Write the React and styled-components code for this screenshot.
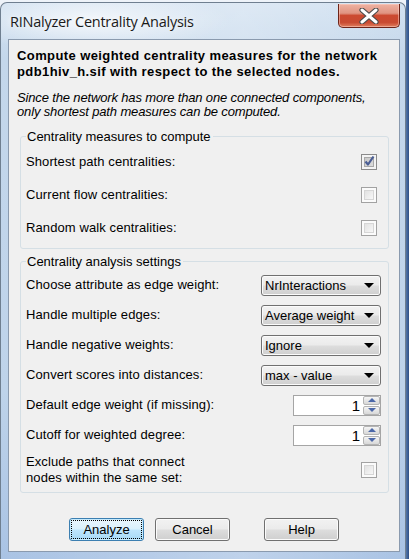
import React from 'react';
import styled, { createGlobalStyle, css } from 'styled-components';

const Global = createGlobalStyle`
  html, body { margin: 0; padding: 0; }
  body {
    width: 409px; height: 559px; overflow: hidden;
    background: #e4ecf5;
    font-family: "Liberation Sans", Arial, sans-serif;
  }
  * { box-sizing: border-box; }
`;

const Desktop = styled.div`
  width: 409px;
  height: 559px;
  padding-top: 2px;
  background: linear-gradient(90deg, #eef3f9 0%, #eef3f9 406px, #5577a8 406px, #2d4f86 409px);
`;

const Window = styled.div`
  width: 406px;
  height: 557px;
  display: flex;
  flex-direction: column;
  padding: 0 5px 7px 7px;
  border: 1px solid #6f7f90;
  border-bottom: none;
  border-radius: 7px 7px 0 0;
  background:
    radial-gradient(ellipse 140px 30px at 90px 18px, rgba(255,255,255,0.75), rgba(255,255,255,0) 100%),
    linear-gradient(90deg, rgba(255,255,255,0) 0%, rgba(255,255,255,0.25) 60%, rgba(255,255,255,0) 100%),
    linear-gradient(180deg, #d3e2f1 0%, #c4d7eb 10%, #bed3ea 70%, #a9c3e4 100%);
`;

const TitleBar = styled.div`
  height: 36px;
  display: flex;
  justify-content: space-between;
  align-items: flex-start;
`;

const Title = styled.div`
  margin: 10px 0 0 2px;
  font-family: "Open Sans", "Noto Sans", sans-serif;
  font-size: 14.5px;
  line-height: 18px;
  letter-spacing: -0.25px;
  color: #1a1a1a;
  text-shadow: 0 0 6px rgba(255,255,255,0.9);
`;

const CloseButton = styled.div`
  width: 62px;
  height: 24px;
  margin-top: 1px;
  border: 1px solid #6d2419;
  border-top: none;
  border-radius: 0 0 5px 5px;
  display: flex;
  align-items: center;
  justify-content: center;
  background: linear-gradient(180deg, #eeb3a3 0%, #e09481 40%, #cc4a30 50%, #c94a31 80%, #e0805f 100%);
  box-shadow: inset 0 0 0 1px rgba(255, 210, 200, 0.5);
`;

const Client = styled.div`
  flex: 1;
  display: flex;
  flex-direction: column;
  background: #f0f0f0;
  border: 1px solid #8a9aae;
  padding: 8px 10px 0 8px;
`;

const Heading = styled.div`
  font-size: 13px;
  font-weight: bold;
  line-height: 16px;
  letter-spacing: 0.4px;
  color: #000;
`;

const Note = styled.div`
  margin-top: 11px;
  font-size: 13px;
  font-style: italic;
  line-height: 14px;
  letter-spacing: -0.15px;
  color: #000;
`;

const Group = styled.fieldset`
  margin: ${p => p.$top}px 0 0 3px;
  padding: 1px 7px ${p => p.$bottom}px 5px;
  border: 1px solid #d5dfe5;
  border-radius: 3px;
  min-width: 0;
  display: flex;
  flex-direction: column;
`;

const Legend = styled.legend`
  padding: 0 2px 0 1px;
  font-size: 13px;
  line-height: 15px;
  color: #000;
`;

const Row = styled.div`
  height: ${p => p.$h}px;
  display: flex;
  align-items: center;
  justify-content: space-between;
`;

const Label = styled.div`
  font-size: 13px;
  line-height: 16px;
  letter-spacing: 0.1px;
  color: #000;
`;

const Box = styled.div`
  width: 16px;
  height: 16px;
  margin-right: 4px;
  border: 1px solid ${p => (p.$checked ? '#8b8b8b' : '#a2a2a2')};
  padding: 2px;
  background: ${p => (p.$checked ? '#f4f4f4' : '#fbfbfb')};
  display: flex;
`;

const BoxInner = styled.div`
  flex: 1;
  position: relative;
  border: 1px solid ${p => (p.$checked ? '#a8a8a8' : '#d6d6d6')};
  background: ${p =>
    p.$checked
      ? 'linear-gradient(135deg, #c9c9c9 0%, #dcdcdc 100%)'
      : 'linear-gradient(135deg, #e2e2e2 0%, #f7f7f7 100%)'};
`;

const CheckMark = styled.svg`
  position: absolute;
  left: -2px;
  top: -3px;
  overflow: visible;
`;

const buttonFace = css`
  border: 1px solid #707070;
  border-radius: 3px;
  background: linear-gradient(180deg, #f2f2f2 0%, #ebebeb 48%, #dddddd 52%, #cfcfcf 100%);
  box-shadow: inset 0 0 0 1px #fbfbfb;
`;

const Combo = styled.div`
  ${buttonFace}
  width: 120px;
  height: 21px;
  display: flex;
  align-items: center;
  justify-content: space-between;
  padding: 0 6px 0 3px;
  font-size: 13px;
  color: #000;
`;

const Arrow = styled.span`
  width: 0;
  height: 0;
  border-left: 5px solid transparent;
  border-right: 5px solid transparent;
  border-top: 5px solid #000;
`;

const Spinner = styled.div`
  width: 88px;
  height: 21px;
  display: flex;
  border: 1px solid #a5a5a5;
  background: #fff;
`;

const SpinValue = styled.div`
  flex: 1;
  text-align: right;
  padding-right: 3px;
  font-size: 15px;
  line-height: 19px;
  color: #000;
`;

const SpinButtons = styled.div`
  width: 17px;
  display: flex;
  flex-direction: column;
  gap: 1px;
`;

const SpinBtn = styled.div`
  flex: 1;
  display: flex;
  align-items: center;
  justify-content: center;
  border: 1px solid #b4b4b4;
  border-radius: 2px;
  background: linear-gradient(180deg, #f5f5f5 0%, #e6e6e6 50%, #d8d8d8 100%);
`;

const SpinArrow = styled.span`
  width: 0;
  height: 0;
  border-left: 4px solid transparent;
  border-right: 4px solid transparent;
  ${p => (p.$up ? 'border-bottom: 4px solid #4c68a8;' : 'border-top: 4px solid #4c68a8;')}
`;

const ButtonRow = styled.div`
  margin-top: 25px;
  display: flex;
  justify-content: center;
  gap: 11px;
  padding-left: 2px;
`;

const Button = styled.div`
  ${buttonFace}
  width: 75px;
  height: 23px;
  margin-left: ${p => (p.$spaced ? 23 : 0)}px;
  display: flex;
  align-items: center;
  justify-content: center;
  font-size: 13px;
  color: #000;
  ${p =>
    p.$default &&
    css`
      border-color: #3c7fb1;
      background: linear-gradient(180deg, #eaf6fd 0%, #d9f0fc 48%, #bee6fd 52%, #a7d9f5 100%);
      box-shadow: inset 0 0 0 1px #c5eafd;
      outline: 1px dotted #000;
      outline-offset: -3px;
    `}
`;

function Checkbox({ checked }) {
  return (
    <Box $checked={checked}>
      <BoxInner $checked={checked}>
        {checked && (
          <CheckMark width="12" height="12" viewBox="0 0 12 12">
            <path d="M2.5 6.5 L5 9.5 L10.5 1.5" fill="none" stroke="#4a5d94" strokeWidth="2.2" strokeLinejoin="round" />
          </CheckMark>
        )}
      </BoxInner>
    </Box>
  );
}

function SpinField({ value }) {
  return (
    <Spinner>
      <SpinValue>{value}</SpinValue>
      <SpinButtons>
        <SpinBtn><SpinArrow $up /></SpinBtn>
        <SpinBtn><SpinArrow /></SpinBtn>
      </SpinButtons>
    </Spinner>
  );
}

export default function App() {
  return (
    <>
      <Global />
      <Desktop>
        <Window>
          <TitleBar>
            <Title>RINalyzer Centrality Analysis</Title>
            <CloseButton>
              <svg width="22" height="16" viewBox="0 0 22 16">
                <path d="M4 2 L18 14 M18 2 L4 14" stroke="#4a4a4a" strokeWidth="5.2" strokeLinecap="round" />
                <path d="M4 2 L18 14 M18 2 L4 14" stroke="#ffffff" strokeWidth="3" strokeLinecap="round" />
              </svg>
            </CloseButton>
          </TitleBar>
          <Client>
            <Heading>
              Compute weighted centrality measures for the network
              <br />
              pdb1hiv_h.sif with respect to the selected nodes.
            </Heading>
            <Note>
              Since the network has more than one connected components,
              <br />
              only shortest path measures can be computed.
            </Note>
            <Group $top={10} $bottom={4}>
              <Legend>Centrality measures to compute</Legend>
              <Row $h={33}>
                <Label>Shortest path centralities:</Label>
                <Checkbox checked />
              </Row>
              <Row $h={33}>
                <Label>Current flow centralities:</Label>
                <Checkbox />
              </Row>
              <Row $h={33}>
                <Label>Random walk centralities:</Label>
                <Checkbox />
              </Row>
            </Group>
            <Group $top={5} $bottom={2}>
              <Legend>Centrality analysis settings</Legend>
              <Row $h={30}>
                <Label>Choose attribute as edge weight:</Label>
                <Combo>NrInteractions<Arrow /></Combo>
              </Row>
              <Row $h={30}>
                <Label>Handle multiple edges:</Label>
                <Combo>Average weight<Arrow /></Combo>
              </Row>
              <Row $h={30}>
                <Label>Handle negative weights:</Label>
                <Combo>Ignore<Arrow /></Combo>
              </Row>
              <Row $h={30}>
                <Label>Convert scores into distances:</Label>
                <Combo>max - value<Arrow /></Combo>
              </Row>
              <Row $h={30}>
                <Label>Default edge weight (if missing):</Label>
                <SpinField value="1" />
              </Row>
              <Row $h={30}>
                <Label>Cutoff for weighted degree:</Label>
                <SpinField value="1" />
              </Row>
              <Row $h={40}>
                <Label>
                  Exclude paths that connect
                  <br />
                  nodes within the same set:
                </Label>
                <Checkbox />
              </Row>
            </Group>
            <ButtonRow>
              <Button $default>Analyze</Button>
              <Button>Cancel</Button>
              <Button $spaced>Help</Button>
            </ButtonRow>
          </Client>
        </Window>
      </Desktop>
    </>
  );
}
